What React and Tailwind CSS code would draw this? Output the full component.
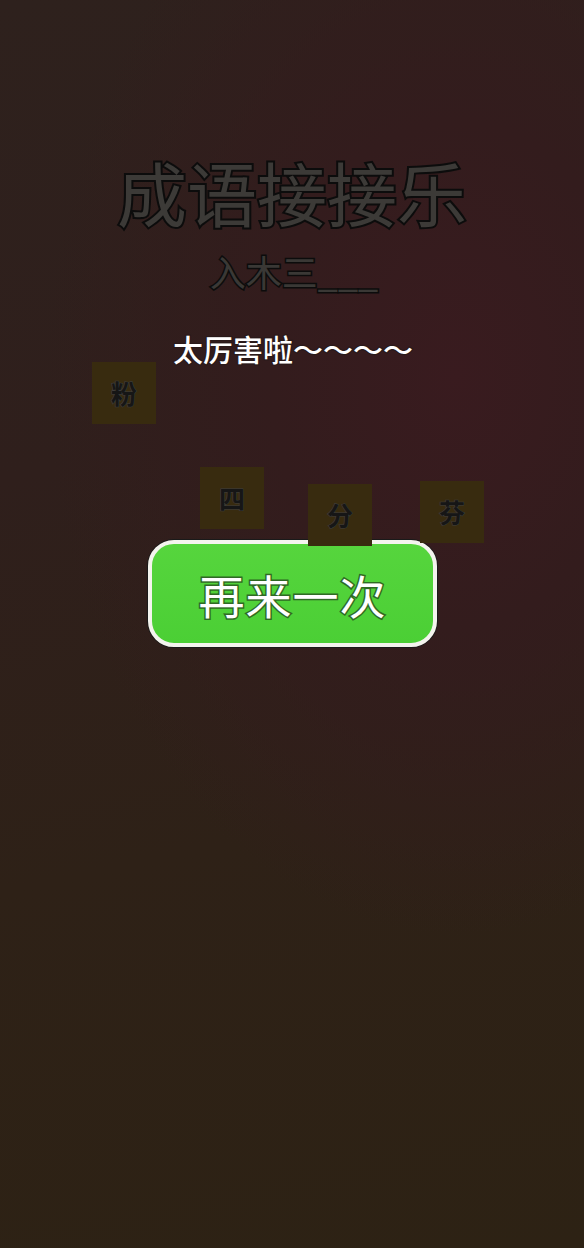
import React from 'react';

const tiles = [
  { ch: '粉', cls: 'left-[92px] top-[-1px]' },
  { ch: '四', cls: 'left-[200px] top-[104px]' },
  { ch: '分', cls: 'left-[308px] top-[121px]' },
  { ch: '芬', cls: 'left-[420px] top-[118px]' },
];

const Tile = ({ ch, cls }) => (
  <div
    className={`absolute ${cls} w-[64px] h-[62px] flex items-center justify-center bg-[#382b0f] text-[26px] font-bold leading-none text-[#161616] [-webkit-text-stroke:1px_#3e3e3e] [paint-order:stroke_fill]`}
  >
    {ch}
  </div>
);

const App = () => {
  return (
    <div className="w-full min-h-[1248px] flex flex-col items-center font-['Noto_Sans_CJK_SC','Noto_Sans',sans-serif] bg-[radial-gradient(ellipse_70%_45%_at_78%_30%,#391b1f_0%,#331c1d_45%,transparent_100%),linear-gradient(168deg,#2e211d_0%,#2f1f1c_35%,#2e2117_65%,#2d2214_100%)]">
      {/* title */}
      <h1 className="mt-[157px] text-[70px] leading-none text-[#3c3a37] [-webkit-text-stroke:4px_#0c0c0c] [paint-order:stroke_fill]">
        成语接接乐
      </h1>
      <div className="mt-[26px] ml-[4px] text-[36px] leading-none text-[#3a3835] [-webkit-text-stroke:3px_#0c0c0c] [paint-order:stroke_fill]">
        入木三___
      </div>
      <div className="mt-[44px] ml-[2px] text-[30px] font-medium leading-none text-white [-webkit-text-stroke:2.5px_#2a1a1a] [paint-order:stroke_fill]">
        太厉害啦～～～～
      </div>

      {/* scattered pieces */}
      <div className="relative w-full h-[177px]">
        {tiles.map((t) => (
          <Tile key={t.ch} ch={t.ch} cls={t.cls} />
        ))}
      </div>

      <button className="ml-[1px] w-[289px] h-[107px] rounded-[26px] border-[4px] border-[#f4f4ee] bg-[linear-gradient(180deg,#56d53d_0%,#4bcf35_100%)] flex items-center justify-center shadow-[0_0_0_1px_#1a1a1a]">
        <span className="text-[46px] leading-none text-white tracking-[1px] [-webkit-text-stroke:3px_#2f6a24] [paint-order:stroke_fill]">
          再来一次
        </span>
      </button>
    </div>
  );
};

export default App;
